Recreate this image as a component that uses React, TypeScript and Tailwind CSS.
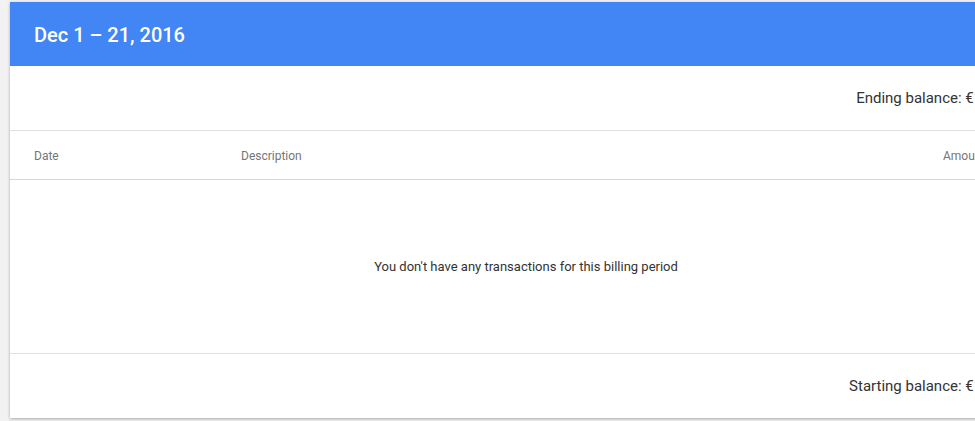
export default function App() {
  return (
    <div className="min-h-[421px] w-[975px] overflow-hidden bg-[#f2f2f2] pt-[2px] pl-[10px] font-['Roboto',sans-serif]">
      <div className="w-[1032px] bg-white shadow-[0_1px_3px_rgba(0,0,0,0.3)]">
        {/* Header */}
        <div className="flex h-[64px] items-center bg-[#4285f4] px-[24px] pt-[2px]">
          <h2 className="text-[20px] font-medium text-white">Dec 1 – 21, 2016</h2>
        </div>

        {/* Ending balance */}
        <div className="flex h-[65px] items-center justify-end border-b border-[#e0e0e0] pr-[39px] pt-[1px]">
          <span className="text-[15px] text-[#333]">Ending balance: €1.00</span>
        </div>

        {/* Table head */}
        <div className="grid h-[49px] grid-cols-[207px_1fr_99px] items-center border-b border-[#d6d6d6] pl-[24px] pt-[1px] text-[12px] text-[#757575]">
          <span>Date</span>
          <span>Description</span>
          <span>Amount</span>
        </div>

        {/* Empty state */}
        <div className="flex h-[174px] items-center justify-center border-b border-[#e0e0e0] pt-[1px]">
          <p className="text-[13px] text-[#333]">You don't have any transactions for this billing period</p>
        </div>

        {/* Starting balance */}
        <div className="flex h-[64px] items-center justify-end pr-[39px] pt-[1px]">
          <span className="text-[15px] text-[#333]">Starting balance: €1.00</span>
        </div>
      </div>
    </div>
  );
}
